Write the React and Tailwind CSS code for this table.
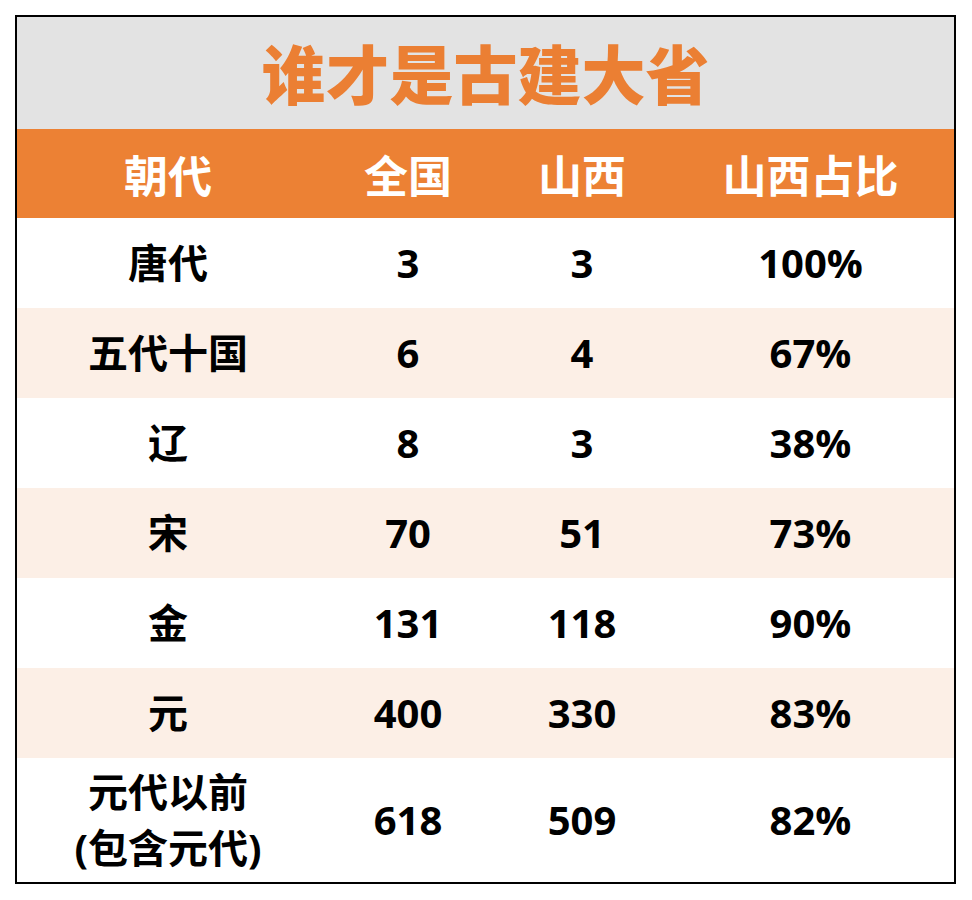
// App.jsx
// "谁才是古建大省" table: gray title band, orange header, striped rows.

const ROWS = [
  { era: '唐代', all: '3', sx: '3', pct: '100%' },
  { era: '五代十国', all: '6', sx: '4', pct: '67%' },
  { era: '辽', all: '8', sx: '3', pct: '38%' },
  { era: '宋', all: '70', sx: '51', pct: '73%' },
  { era: '金', all: '131', sx: '118', pct: '90%' },
  { era: '元', all: '400', sx: '330', pct: '83%' },
];

const GRID = 'grid grid-cols-[302px_178px_170px_1fr] items-center text-center';

function Row({ row, striped }) {
  return (
    <div className={`${GRID} h-[90px] ${striped ? 'bg-[#fcefe6]' : 'bg-white'}`}>
      <div>{row.era}</div>
      <div>{row.all}</div>
      <div>{row.sx}</div>
      <div>{row.pct}</div>
    </div>
  );
}

export default function App() {
  return (
    <div
      className="min-h-[900px] w-[972px] bg-white pt-[15px] pl-[15px]"
      style={{ fontFamily: '"Open Sans", "Noto Sans CJK SC", sans-serif' }}
    >
      <div className="w-[941px] border-2 border-black">
        <div className="flex h-[112px] items-center justify-center bg-[#e3e3e3]">
          <h1
            className="pb-1 text-[64px] font-black leading-none text-[#eb7f33]"
            style={{ fontFamily: '"Noto Sans CJK SC", sans-serif' }}
          >
            谁才是古建大省
          </h1>
        </div>
        <div
          className={`${GRID} h-[89px] bg-[#ec8134] text-[44px] font-bold text-white`}
          style={{ fontFamily: '"Noto Sans CJK SC", sans-serif' }}
        >
          <div>朝代</div>
          <div>全国</div>
          <div>山西</div>
          <div>山西占比</div>
        </div>
        <div className="text-[40px] font-bold leading-tight text-black">
          {ROWS.map((row, i) => (
            <Row key={row.era} row={row} striped={i % 2 === 1} />
          ))}
          <div className={`${GRID} h-[124px] bg-white`}>
            <div className="flex flex-col leading-[56px]">
              <span>元代以前</span>
              <span>(包含元代)</span>
            </div>
            <div>618</div>
            <div>509</div>
            <div>82%</div>
          </div>
        </div>
      </div>
    </div>
  );
}
